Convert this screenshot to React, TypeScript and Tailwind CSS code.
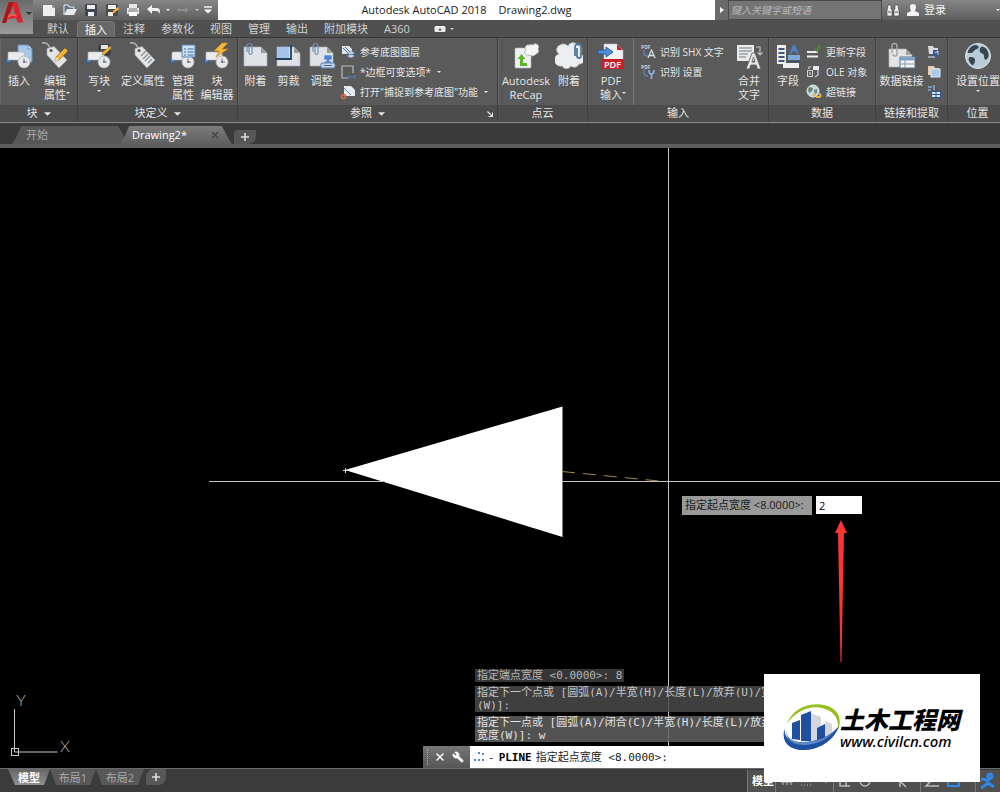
import clsx from 'clsx';
import { Wrench, X } from 'lucide-react';
import React from 'react';

type IconProps = { className?: string };

/* ---------- shared bits ---------- */

function Caret({ className }: IconProps) {
  return (
    <svg viewBox="0 0 8 4" className={clsx('shrink-0', className ?? 'h-1 w-2')}>
      <path d="M0 0h8L4 4z" fill="currentColor" />
    </svg>
  );
}

function Big({ children }: { children: React.ReactNode }) {
  return (
    <svg viewBox="0 0 28 28" className="size-7 shrink-0">
      {children}
    </svg>
  );
}

function Small({ children }: { children: React.ReactNode }) {
  return (
    <svg viewBox="0 0 16 16" className="size-4 shrink-0">
      {children}
    </svg>
  );
}

function BlockShape() {
  return (
    <>
      <path d="M4 18l4-3" stroke="#b8bec6" />
      <rect x="1.500" y="16.500" width="4" height="4" fill="#5b80ad" stroke="#3c5f8f" />
      <rect x="3" y="10" width="16" height="8" rx="1" fill="#e8ebef" stroke="#b2b8c0" strokeWidth="0.6" />
      <circle cx="19" cy="20" r="6" fill="#e6e8ea" stroke="#aeb2b7" strokeWidth="0.8" />
      <path d="M19 16.500V20h3" stroke="#6b7077" fill="none" />
      <circle cx="19" cy="20" r="1" fill="#6b7077" />
    </>
  );
}

function TagShape() {
  return (
    <>
      <path d="M1 1c5-1 7 2 9 7" stroke="#b9bcc0" strokeWidth="1.400" fill="none" />
      <path d="M6 6.500l7-2L26 18l-8 8L6 13z" fill="#e2e4e6" stroke="#a5a9ad" strokeWidth="0.7" />
      <circle cx="10" cy="8.500" r="1.600" fill="#5a5a5a" />
    </>
  );
}

function SheetShape() {
  return (
    <>
      <path d="M2 5h17l6 6v13H2z" fill="#dfe3e8" stroke="#aab0b7" strokeWidth="0.7" />
      <path d="M19 5v6h6z" fill="#9c9a93" />
    </>
  );
}

function Clip() {
  return <path d="M5 10V4a2.500 2.500 0 015 0v7a1.500 1.500 0 01-3 0V5" fill="none" stroke="#6f8fae" strokeWidth="1.200" />;
}

/* ---------- large ribbon icons ---------- */

const insertIcon = (
  <Big>
    <path d="M13 3h10l4 4v13H13z" fill="#a9c7ea" stroke="#6d91bd" />
    <path d="M23 3v4h4" fill="#dce9f7" stroke="#6d91bd" />
    <BlockShape />
  </Big>
);

const editAttrIcon = (
  <Big>
    <TagShape />
    <path d="M14 19l1-4L24 6l3 3-9 9z" fill="#f0b437" stroke="#9b6c12" strokeWidth="0.7" />
    <path d="M14 19l1-4 3 3z" fill="#efe0c2" />
  </Big>
);

const writeBlockIcon = (
  <Big>
    <rect x="14" y="3" width="11" height="10" rx="1" fill="#4e4e4e" stroke="#2e2e2e" />
    <rect x="16" y="3" width="7" height="4" fill="#e6e6e6" />
    <BlockShape />
    <path d="M17 13l1-3 7-6 1.500 2-6.500 6z" fill="#f0b437" stroke="#9b6c12" strokeWidth="0.5" />
  </Big>
);

const defineAttrIcon = (
  <Big>
    <TagShape />
    <path d="M12 14l5-5M14 17l5-5M16 19l5-5M19 21l4-4" stroke="#8b9197" strokeWidth="1.300" />
  </Big>
);

const manageAttrIcon = (
  <Big>
    <BlockShape />
    <rect x="13" y="3" width="13" height="12" fill="#cfe0f3" stroke="#5783b6" />
    <path d="M15 7h2M15 10h2M15 13h2M18.500 7h6M18.500 10h6M18.500 13h6" stroke="#3f6da3" />
  </Big>
);

const blockEditorIcon = (
  <Big>
    <BlockShape />
    <path d="M19 1l-8 8h5l-3 6 12-8h-6l6-6z" fill="#f6b73c" stroke="#c07f12" strokeWidth="0.6" />
  </Big>
);

const attachIcon = (
  <Big>
    <SheetShape />
    <Clip />
  </Big>
);

const clipIcon = (
  <Big>
    <SheetShape />
    <rect x="2" y="5" width="12" height="11" fill="#a7c5ea" />
    <path d="M0 17h16V3" fill="none" stroke="#24405f" strokeWidth="1.800" />
  </Big>
);

const adjustIcon = (
  <Big>
    <SheetShape />
    <Clip />
    <path d="M16 13h8v5h-3l4 3H15l4-3h-3z" fill="#4b84d8" stroke="#dfe9f6" strokeWidth="0.6" />
    <rect x="13" y="21" width="14" height="5" rx="1" fill="#c4d5ea" stroke="#5d7fa8" />
    <path d="M16 23.500h8" stroke="#3e6699" />
  </Big>
);

const recapIcon = (
  <Big>
    <rect x="3" y="6" width="16" height="20" rx="1" fill="#eef0f0" stroke="#b4b8b8" strokeWidth="0.6" />
    <path
      d="M14 8a3 3 0 013-5 3.500 3.500 0 014 0 3 3 0 015 4 3 3 0 01-2 5 4 4 0 01-6 1 3 3 0 01-4-5z"
      fill="#f6f6f6"
      stroke="#9da1a3"
      strokeWidth="0.7"
    />
    <path d="M15 24H8v-7H5.500L9.500 12l4 5H11v4h4z" fill="#5fb52a" />
  </Big>
);

const cloudIcon = (
  <Big>
    <path
      d="M4 12a5 5 0 011-9 6 6 0 018 1 5 5 0 019-1 5 5 0 013 9 5 5 0 01-1 10 5 5 0 01-8 2 5 5 0 01-9 0 5 5 0 01-3-12z"
      fill="#eceef0"
      stroke="#b3b7bb"
      strokeWidth="0.7"
    />
    <path d="M20 14V5a3 3 0 016 0v9a2 2 0 01-4 0V6" fill="none" stroke="#55789f" strokeWidth="1.800" />
  </Big>
);

const pdfIcon = (
  <Big>
    <path d="M7 2h13l6 6v10H7z" fill="#f2f3f4" stroke="#b6b9bc" strokeWidth="0.6" />
    <path d="M20 2v6h6z" fill="#c9232d" />
    <path d="M1 8h8V5l7 5-7 5v-3H1z" fill="#4f8ed8" stroke="#234f88" strokeWidth="0.8" />
    <rect x="4" y="17" width="23" height="10" fill="#c8202b" />
    <text x="15.500" y="25.500" textAnchor="middle" fill="#fff" fontSize="9" fontFamily="Open Sans" fontWeight="600">
      PDF
    </text>
  </Big>
);

const mergeTextIcon = (
  <Big>
    <rect x="2" y="3" width="17" height="16" fill="#e9ebec" />
    <path d="M4 6h13M4 9h13M4 12h9M4 15h7" stroke="#737a80" strokeWidth="1.200" />
    <path d="M21 5h4v8M22.500 10.500L25 13l2.500-2.500" fill="none" stroke="#b8bcc0" strokeWidth="1.200" />
    <path d="M11 27l6-16h3l6 16h-3.500l-1.400-4h-5.200l-1.400 4zM17 20h3l-1.500-5z" fill="#e2e4e6" stroke="#5a5a5a" strokeWidth="0.8" fillRule="evenodd" />
  </Big>
);

const fieldIcon = (
  <Big>
    <rect x="3" y="3" width="9" height="19" fill="#eceef0" />
    <path d="M4.500 7h6M4.500 11h6M4.500 15h6M4.500 19h6" stroke="#3f567a" strokeWidth="1.800" />
    <path d="M15 12l4-9h2l4 9h-2l-1-2.500h-4L17 12z" fill="#4e7fc4" />
    <rect x="14" y="13" width="12" height="5" fill="#7ea7db" />
    <rect x="9" y="21" width="16" height="5" fill="#eceef0" />
    <path d="M14 19.500h12" stroke="#33517c" />
  </Big>
);

const dataLinkIcon = (
  <Big>
    <path d="M1 7h17l6 6v12H1z" fill="#e3e4e5" stroke="#acafb2" strokeWidth="0.7" />
    <path d="M18 7v6h6z" fill="#a6a39b" />
    <path d="M4 11V4a2.500 2.500 0 015 0v8a2 2 0 01-4 0" fill="none" stroke="#a3a6aa" strokeWidth="1.500" />
    <rect x="12" y="15" width="15" height="11" fill="#f3f4f5" stroke="#54708f" />
    <path d="M12 17h15" stroke="#7fa0c8" strokeWidth="3" />
    <path d="M17 18v8M12 22h15" stroke="#8a96a3" />
  </Big>
);

const globeIcon = (
  <Big>
    <circle cx="14" cy="14" r="12.500" fill="#b9cdd6" stroke="#dfe5e8" />
    <path d="M5 7c3-4 7-5 9-3s-1 3-3 4-2 3-4 3-5 1-2-4zM17 5c3-1 6 2 7 5s1 5-1 7-3 0-3-3-3-2-4-4 0-4 1-5zM6 15c2 0 5 0 5 3s-1 4-2 5-3-2-4-4 0-4 1-4z" fill="#37474f" />
  </Big>
);

/* ---------- small ribbon icons ---------- */

const layersIcon = (
  <Small>
    <path d="M2 2h7l3 3v5H2z" fill="#dfe6ee" />
    <path d="M3 4l5 5M5 3l5 5" stroke="#466d9b" />
    <path d="M7 9l4-2 4 2-4 2zM7 12l4-2 4 2-4 2z" fill="#c9d8ea" stroke="#5a7ba6" strokeWidth="0.6" />
  </Small>
);

const frameIcon = (
  <Small>
    <path d="M8 14H2V2h11v7" fill="none" stroke="#b9bec4" strokeWidth="1.200" />
    <path d="M9 11v4M15 11v4M11 12v2M13 12v2" stroke="#4d82c4" />
  </Small>
);

const snapIcon = (
  <Small>
    <path d="M4 2h7l4 4v6H4z" fill="#e8ebee" />
    <path d="M4 4l7 7" stroke="#688ab4" />
    <circle cx="3.500" cy="12.500" r="2" fill="none" stroke="#e5672b" strokeWidth="1.600" />
  </Small>
);

function PdfGlyph({ children }: { children: React.ReactNode }) {
  return (
    <Small>
      <text x="1" y="5" fontSize="5" fill="#cdd1d5" fontFamily="Open Sans" fontWeight="700">
        PDF
      </text>
      <path d="M4 6c-1 4 1 6 4 6" fill="none" stroke="#5f84b5" strokeWidth="1.400" />
      {children}
    </Small>
  );
}

const shxIcon = (
  <PdfGlyph>
    <path d="M8 14l3.500-8L15 14M9.500 11.500h4" fill="none" stroke="#d9dde1" strokeWidth="1.300" />
  </PdfGlyph>
);

const shxSettingsIcon = (
  <PdfGlyph>
    <path d="M11.500 15V10M9 6c0 3 1 4 2.500 4S14 9 14 6" fill="none" stroke="#86b0e4" strokeWidth="1.800" />
  </PdfGlyph>
);

const updateFieldIcon = (
  <Small>
    <path d="M1 8h11M1 12.500h11" stroke="#eceeef" strokeWidth="2.200" />
    <path d="M9 5l2 2 3-6" fill="none" stroke="#4f8a31" strokeWidth="1.800" />
  </Small>
);

const oleIcon = (
  <Small>
    <rect x="7" y="2" width="6" height="4" fill="#e5e7e9" />
    <rect x="1.500" y="6.500" width="5" height="6" fill="none" stroke="#cfd2d5" />
    <path d="M4 8v3M12 6v5l-3 2M5 3H3v2" fill="none" stroke="#cfd2d5" strokeWidth="1.200" />
  </Small>
);

const hyperlinkIcon = (
  <Small>
    <circle cx="7" cy="7" r="6" fill="#c3d6dd" stroke="#e1e6e8" />
    <path d="M3 3l4 1-1 3-3 2-1-3zM8 6l3-1v4l-2 1z" fill="#6b8577" />
    <path d="M8 12a2 2 0 012-2M10 13h3a1.500 1.500 0 000-3" fill="none" stroke="#e5b434" strokeWidth="2" />
  </Small>
);

const uploadIcon = (
  <Small>
    <path d="M2 2h5l1 2h4v6H3z" fill="#d9dde1" />
    <rect x="7" y="6" width="7" height="7" fill="#33578e" />
    <path d="M2 13h7M9 9l3-2v4" stroke="#e3e7ea" fill="none" />
  </Small>
);

const downloadIcon = (
  <Small>
    <path d="M2 2h6l1 2h4v7H2z" fill="#e7cdb0" />
    <rect x="5" y="5" width="9" height="8" fill="#a9c8ec" stroke="#dce8f5" />
  </Small>
);

const extractIcon = (
  <Small>
    <path d="M2 3h4M2 6h3M8 1v5" stroke="#87abd8" strokeWidth="1.600" />
    <rect x="5.500" y="7.500" width="9" height="6" fill="#d7e3f2" stroke="#2f568d" />
    <path d="M6 10.500h9M10 7v7" stroke="#2f568d" />
  </Small>
);

/* ---------- ribbon building blocks ---------- */

interface BigButtonProps {
  icon: React.ReactNode;
  lines: string[];
  width: string;
  menu?: 'below' | 'side';
}

function BigButton({ icon, lines, width, menu }: BigButtonProps) {
  return (
    <button type="button" className={clsx('flex shrink-0 flex-col items-center pt-1', width)}>
      {icon}
      <span className="relative mt-1 text-[11px] leading-[14px] whitespace-nowrap">
        {lines.map((line) => (
          <span key={line} className="block">
            {line}
          </span>
        ))}
        {menu === 'side' && <Caret className="absolute -right-1 bottom-2 h-0.5 w-1" />}
      </span>
      {menu === 'below' && <Caret className="mt-0.5 h-0.5 w-1" />}
    </button>
  );
}

interface RowButtonProps {
  icon: React.ReactNode;
  label: string;
  menu?: boolean;
  iconOnly?: boolean;
}

function RowButton({ icon, label, menu, iconOnly }: RowButtonProps) {
  return (
    <button
      type="button"
      aria-label={iconOnly ? label : undefined}
      className="flex h-5 items-center gap-1 text-[10px] leading-5 whitespace-nowrap"
    >
      {icon}
      {!iconOnly && label}
      {menu && <Caret className="ml-0.5 h-0.5 w-1" />}
    </button>
  );
}

interface PanelProps {
  title: string;
  menu?: boolean;
  launcher?: boolean;
  className?: string;
  children: React.ReactNode;
}

function Panel({ title, menu, launcher, className, children }: PanelProps) {
  return (
    <section className={clsx('flex flex-col border-r border-[#3f3f3f] shadow-[inset_1px_0_#666]', className)}>
      <div className="flex h-[67px] px-px">{children}</div>
      <div className="relative flex h-[17px] items-center justify-center gap-1.5 bg-[#4c4c4c] text-[11px] whitespace-nowrap">
        {title}
        {menu && <Caret className="h-1 w-[7px]" />}
        {launcher && (
          <button type="button" aria-label={title} className="absolute right-1">
            <svg viewBox="0 0 6 6" className="size-1.5">
              <path d="M0.500 0.500L5 5M5.500 1.500v4h-4" fill="none" stroke="#e6e6e6" strokeWidth="1.200" />
            </svg>
          </button>
        )}
      </div>
    </section>
  );
}

function Ribbon() {
  return (
    <div className="flex overflow-hidden border-t border-[#383838] border-b border-b-[#8b8b8b] bg-[#5a5a5a] text-[#e6e6e6]">
      <Panel title="块" menu className="w-[78px] shrink-0">
        <BigButton icon={insertIcon} lines={['插入']} width="w-9" />
        <BigButton icon={editAttrIcon} lines={['编辑', '属性']} width="w-9" menu="side" />
      </Panel>
      <Panel title="块定义" menu className="w-[160px] shrink-0">
        <BigButton icon={writeBlockIcon} lines={['写块']} width="w-10" menu="below" />
        <BigButton icon={defineAttrIcon} lines={['定义属性']} width="w-12" />
        <BigButton icon={manageAttrIcon} lines={['管理', '属性']} width="w-8" />
        <BigButton icon={blockEditorIcon} lines={['块', '编辑器']} width="w-9" />
      </Panel>
      <Panel title="参照" menu launcher className="w-[260px] shrink-0">
        <BigButton icon={attachIcon} lines={['附着']} width="w-[33px]" />
        <BigButton icon={clipIcon} lines={['剪裁']} width="w-[33px]" />
        <BigButton icon={adjustIcon} lines={['调整']} width="w-[33px]" />
        <div className="flex flex-col pt-1 pl-0.5">
          <RowButton icon={layersIcon} label="参考底图图层" />
          <RowButton icon={frameIcon} label="*边框可变选项*" menu />
          <RowButton icon={snapIcon} label={'打开"捕捉到参考底图"功能'} menu />
        </div>
      </Panel>
      <Panel title="点云" className="w-[90px] shrink-0">
        <BigButton icon={recapIcon} lines={['Autodesk', 'ReCap']} width="w-[54px]" />
        <BigButton icon={cloudIcon} lines={['附着']} width="w-8" />
      </Panel>
      <Panel title="输入" className="w-[181px] shrink-0">
        <BigButton icon={pdfIcon} lines={['PDF', '输入']} width="w-11" menu="side" />
        <div className="flex grow flex-col border-l border-[#777] pt-1 pl-1.5">
          <RowButton icon={shxIcon} label="识别 SHX 文字" />
          <RowButton icon={shxSettingsIcon} label="识别 设置" />
        </div>
        <BigButton icon={mergeTextIcon} lines={['合并', '文字']} width="w-9" />
      </Panel>
      <Panel title="数据" className="w-[107px] shrink-0">
        <BigButton icon={fieldIcon} lines={['字段']} width="w-9" />
        <div className="flex flex-col pt-1">
          <RowButton icon={updateFieldIcon} label="更新字段" />
          <RowButton icon={oleIcon} label="OLE 对象" />
          <RowButton icon={hyperlinkIcon} label="超链接" />
        </div>
      </Panel>
      <Panel title="链接和提取" className="w-[72px] shrink-0">
        <BigButton icon={dataLinkIcon} lines={['数据链接']} width="w-[49px]" />
        <div className="flex flex-col pt-1">
          <RowButton icon={uploadIcon} label="上载到源" iconOnly />
          <RowButton icon={downloadIcon} label="从源下载" iconOnly />
          <RowButton icon={extractIcon} label="提取数据" iconOnly />
        </div>
      </Panel>
      <Panel title="位置" className="min-w-[60px] grow">
        <BigButton icon={globeIcon} lines={['设置位置']} width="w-[58px]" menu="below" />
      </Panel>
    </div>
  );
}

/* ---------- title bar ---------- */

function QuickAccess() {
  return (
    <div className="flex w-[185px] shrink-0 items-center gap-[5px] bg-linear-to-b from-[#868686] to-[#5f5f5f] pl-2 text-[#f1f1f1]">
      <button type="button" aria-label="新建">
        <svg viewBox="0 0 16 16" className="size-4">
          <path d="M2 3h9l3 3v8H2z" fill="#eee" />
          <path d="M11 3v3h3z" fill="#999" />
        </svg>
      </button>
      <button type="button" aria-label="打开">
        <svg viewBox="0 0 16 16" className="size-4">
          <path d="M2 13V3h4l1 2h5v2" fill="#5f6f80" stroke="#eee" />
          <path d="M2 13l3-6h10l-3 6z" fill="#e8eaec" />
        </svg>
      </button>
      <button type="button" aria-label="保存">
        <svg viewBox="0 0 16 16" className="size-4">
          <rect x="2" y="2" width="12" height="12" rx="1" fill="#3d4650" />
          <path d="M4 3h8v4H4zM5 10h6v4H5z" fill="#eee" />
        </svg>
      </button>
      <button type="button" aria-label="另存为">
        <svg viewBox="0 0 16 16" className="size-4">
          <rect x="2" y="2" width="12" height="12" rx="1" fill="#4b4b4b" />
          <path d="M4 3h8v4H4zM4 10h5v4H4z" fill="#eee" />
          <path d="M8 12l1-3 5-4 1 2-5 4z" fill="#f2b63a" />
        </svg>
      </button>
      <button type="button" aria-label="打印">
        <svg viewBox="0 0 16 16" className="size-4">
          <path d="M4 2h8v4H4zM2 6h12v6H2z" fill="#e6e6e6" />
          <path d="M3 9h10M4 7h8" stroke="#777" />
          <path d="M4 10h8v4H4z" fill="#fff" />
        </svg>
      </button>
      <button type="button" aria-label="放弃" className="flex items-center gap-1">
        <svg viewBox="0 0 16 16" className="size-4">
          <path d="M1 7l5-4v3h5c3 0 3 3 3 6-1-2-2-3-4-3H6v3z" fill="#f2f2f2" />
        </svg>
        <Caret className="h-0.5 w-1" />
      </button>
      <button type="button" aria-label="重做" className="flex items-center gap-1 text-[#ccc]">
        <svg viewBox="0 0 16 16" className="size-4">
          <path d="M14 8l-4-3v2H2v2h8v2z" fill="#8d8d8d" />
        </svg>
        <Caret className="h-0.5 w-1" />
      </button>
      <button type="button" aria-label="自定义快速访问工具栏">
        <svg viewBox="0 0 8 8" className="size-2">
          <path d="M0 1h8" stroke="#fff" strokeWidth="1.400" />
          <path d="M0 3.500h8L4 7.500z" fill="#fff" />
        </svg>
      </button>
    </div>
  );
}

function TitleBar() {
  return (
    <div className="flex h-5">
      <QuickAccess />
      <h1 className="flex grow items-center justify-center gap-3 bg-white text-[11px] whitespace-nowrap text-[#222]">
        <span>Autodesk AutoCAD 2018</span>
        <span>Drawing2.dwg</span>
      </h1>
      <button type="button" aria-label="展开搜索" className="flex w-[13px] items-center justify-center bg-[#6a6a6a]">
        <svg viewBox="0 0 4 6" className="h-1.5 w-1">
          <path d="M0 0l4 3-4 3z" fill="#fff" />
        </svg>
      </button>
      <input
        aria-label="键入关键字或短语"
        placeholder="键入关键字或短语"
        className="w-[154px] border border-[#4a4a4a] bg-[#747474] px-0.5 text-[10px] italic outline-none placeholder:text-[#b8b8b8]"
      />
      <div className="flex w-[118px] items-center gap-1.5 bg-linear-to-b from-[#868686] to-[#5f5f5f] pl-1 text-[11px] text-[#f1f1f1]">
        <button type="button" aria-label="搜索">
          <svg viewBox="0 0 14 14" className="size-3.5">
            <path d="M1 13V8l1-6h3v4h1v7zM13 13V8l-1-6H9v4H8v7z" fill="#eee" stroke="#444" strokeWidth="0.6" />
            <path d="M2 9h3M9 9h3" stroke="#555" />
          </svg>
        </button>
        <button type="button" className="flex items-center gap-1">
          <svg viewBox="0 0 14 14" className="size-3.5">
            <path d="M4 4a3 3 0 016 0c0 2-1 3-1 4l4 2v3H1v-3l4-2C5 7 4 6 4 4z" fill="#f4f4f4" />
          </svg>
          登录
        </button>
        <Caret className="ml-auto h-0.5 w-1" />
      </div>
    </div>
  );
}

const ribbonTabs = ['默认', '插入', '注释', '参数化', '视图', '管理', '输出', '附加模块', 'A360'];

function RibbonTabs() {
  return (
    <nav className="flex h-[17px] items-end pl-1.5 text-[11px] leading-4 text-[#d2d2d2]">
      {ribbonTabs.map((tab) => (
        <button
          key={tab}
          type="button"
          className={clsx(
            'h-4 whitespace-nowrap',
            tab === '插入'
              ? 'rounded-t-sm border border-b-0 border-[#777] bg-[#686868] px-[7px] leading-[14px] text-white'
              : 'px-2',
          )}
        >
          {tab}
        </button>
      ))}
      <button type="button" aria-label="最小化功能区" className="flex h-4 items-center gap-1 px-4">
        <svg viewBox="0 0 12 8" className="h-2 w-3">
          <rect x="0.500" y="1" width="11" height="6" rx="1.500" fill="#eee" />
          <path d="M4 5.500h4L6 3z" fill="#555" />
        </svg>
        <Caret className="h-0.5 w-1" />
      </button>
    </nav>
  );
}

function AppHeader() {
  return (
    <header className="flex bg-[#505050]">
      <button
        type="button"
        aria-label="应用程序菜单"
        className="flex h-[34px] w-[33px] shrink-0 items-center bg-linear-to-b from-[#6a6a6a] to-[#9a9a9a] pb-2 text-[#333]"
      >
        <svg viewBox="0 0 24 26" className="h-[26px] w-6 shrink-0">
          <path d="M2 23L9 2h8l6 20-5 1-2-5-9 1-1 4z" fill="#d8232a" />
          <path d="M2 23L9 2h4L6 23z" fill="#a8161d" />
          <path d="M10 14h5l-2-8z" fill="#7b7b7b" />
          <path d="M7 19c3-3 6-4 10-2l-1-3H9z" fill="#ef5a55" />
        </svg>
        <Caret className="ml-0.5 h-[3px] w-1.5" />
      </button>
      <div className="min-w-0 grow">
        <TitleBar />
        <RibbonTabs />
      </div>
    </header>
  );
}

function DocumentTabs() {
  return (
    <div className="flex h-[25px] items-end border-b-4 border-[#5f5f5f] bg-[#3a3a3a] pl-3 text-[11px] leading-[18px]">
      <button type="button" className="h-[18px] w-[116px] bg-[#575757] pl-3.5 text-left text-[#a8a8a8] [clip-path:polygon(0_100%,5px_55%,9px_0,106px_0,112px_55%,100%_100%)]">
        开始
      </button>
      <div className="-ml-2 flex h-[18px] w-28 items-center justify-between bg-linear-to-b from-[#7c7c7c] to-[#5f5f5f] pr-3 pl-3 text-white [clip-path:polygon(0_100%,5px_55%,9px_0,102px_0,107px_55%,100%_100%)]">
        <button type="button">Drawing2*</button>
        <button type="button" aria-label="关闭" className="text-[#484848]">
          <X className="size-2.5" strokeWidth={4} />
        </button>
      </div>
      <button type="button" aria-label="新图形" className="ml-0.5 flex h-3.5 w-[22px] items-center justify-center rounded-tl-sm rounded-br-lg bg-[#575757] text-[#ddd]">
        <svg viewBox="0 0 8 8" className="size-2">
          <path d="M4 0v8M0 4h8" stroke="currentColor" strokeWidth="1.600" />
        </svg>
      </button>
    </div>
  );
}

/* ---------- drawing area ---------- */

function Drawing() {
  return (
    <svg className="absolute inset-0 h-full w-full">
      <path d="M345 322L562.500 258.500V389z" fill="#fff" />
      <path d="M343 322.500h5M345.500 320v5" stroke="#ddd" />
      <line x1="209" y1="333.500" x2="100%" y2="333.500" stroke="#c4c4c4" />
      <path d="M385 333.500h177" stroke="#fff" />
      <line x1="668.500" y1="0" x2="668.500" y2="100%" stroke="#c4c4c4" />
      <path d="M562 323.500L664 333.500" stroke="#a58a45" strokeDasharray="13 8" />
      <path d="M841 372l6 13h-3l-2.500 129h-1L838 385h-3z" fill="#f93535" />
    </svg>
  );
}

function UcsIcon() {
  return (
    <svg viewBox="0 0 76 84" className="absolute bottom-0 left-1 h-[84px] w-[76px] font-['Lato',sans-serif] font-light">
      <path d="M10.500 25v43h43" fill="none" stroke="#c8c8c8" />
      <rect x="7.500" y="64.500" width="7" height="7" fill="none" stroke="#c8c8c8" />
      <text x="17" y="22" textAnchor="middle" fontSize="16" fill="#b5b5b5">
        Y
      </text>
      <text x="61" y="68" textAnchor="middle" fontSize="16" fill="#b5b5b5">
        X
      </text>
    </svg>
  );
}

function DynamicInput() {
  return (
    <div className="absolute top-[348px] left-[682px] flex items-start gap-1 text-[11px]">
      <label htmlFor="start-width" className="h-[19px] w-[130px] bg-[#999] pl-[3px] leading-[18px] whitespace-nowrap text-[#1c1c1c]">
        {'指定起点宽度 <8.0000>:'}
      </label>
      <input id="start-width" defaultValue="2" className="h-[18px] w-[46px] bg-white pl-[3px] text-black outline-none" />
    </div>
  );
}

function CommandLine() {
  return (
    <div className="absolute bottom-0 left-[423px] flex w-[550px] flex-col gap-1 font-['DejaVu_Sans_Mono','Noto_Sans_CJK_SC',monospace] text-[11px] leading-[13px] whitespace-nowrap">
      <div className="flex flex-col items-start gap-1 pl-[52px]">
        <p className="bg-[#3c3c3c]/90 px-0.5 text-[#b5b5b5]">{'指定端点宽度 <0.0000>: 8'}</p>
        <p className="w-full bg-[#4a4a4a]/85 px-0.5 text-[#c4c4c4]">
          指定下一个点或 [圆弧(A)/半宽(H)/长度(L)/放弃(U)/宽度
          <br />
          (W)]:
        </p>
        <p className="w-full bg-[#606060]/85 px-0.5 text-[#e2e2e2]">
          指定下一点或 [圆弧(A)/闭合(C)/半宽(H)/长度(L)/放弃(U)/
          <br />
          宽度(W)]: w
        </p>
      </div>
      <div className="flex h-[22px] bg-white">
        <div className="flex w-[47px] items-center gap-1.5 bg-linear-to-b from-[#777] to-[#555] pl-1 text-white">
          <span className="h-4 border-l border-dotted border-[#aaa]" />
          <button type="button" aria-label="关闭">
            <X className="size-3" strokeWidth={3} />
          </button>
          <button type="button" aria-label="自定义">
            <Wrench className="size-3 -scale-x-100 fill-current" />
          </button>
        </div>
        <label htmlFor="command" className="flex items-center gap-1 pl-1 text-[#222]">
          <svg viewBox="0 0 10 10" className="size-2.5">
            <path d="M4 0h2v2H4zM8 1h2v2H8zM0 7h2v2H0zM4 7h2v2H4zM8 7h2v2H8z" fill="#4c87cf" />
          </svg>
          <span>-</span>
          <b className="text-black">PLINE</b>
          <span>{'指定起点宽度 <8.0000>:'}</span>
        </label>
        <input id="command" className="min-w-0 grow pl-1 outline-none" />
      </div>
    </div>
  );
}

/* ---------- status bar ---------- */

function LayoutTabs() {
  return (
    <div className="flex h-4 pl-2 text-[11px] leading-[15px] text-[#a9a9a9]">
      <button type="button" className="w-[42px] bg-linear-to-b from-[#666] to-[#909090] font-bold text-white [clip-path:polygon(0_0,100%_0,36px_100%,7px_100%)]">
        模型
      </button>
      <button type="button" className="w-[46px] bg-[#585858] [clip-path:polygon(0_0,100%_0,40px_100%,6px_100%)]">
        布局1
      </button>
      <button type="button" className="w-[48px] bg-[#585858] [clip-path:polygon(0_0,100%_0,42px_100%,6px_100%)]">
        布局2
      </button>
      <button type="button" aria-label="新建布局" className="ml-0.5 flex w-5 items-center justify-center rounded-tl-lg rounded-br-lg bg-[#585858] text-[#ddd]">
        <svg viewBox="0 0 8 8" className="size-2">
          <path d="M4 0v8M0 4h8" stroke="currentColor" strokeWidth="1.600" />
        </svg>
      </button>
    </div>
  );
}

function StatusBar() {
  return (
    <footer className="flex h-6 justify-between overflow-hidden border-t border-[#6c6c6c] bg-[#3b3b3b]">
      <LayoutTabs />
      <div className="mt-px flex w-[253px] divide-x divide-[#777] border-l border-[#777] bg-[#505050] text-[11px] text-[#bbb]">
        <button type="button" className="w-[28px] pl-1 text-left font-bold whitespace-nowrap text-white">
          模型
        </button>
        <button type="button" aria-label="栅格" className="w-[58px]">
          <svg viewBox="0 0 58 22" className="h-[22px] w-[58px]">
            <path d="M5 8h12M5 12h12M7 6v9M11 6v9M15 6v9" stroke="currentColor" />
            <path d="M25 8h12M25 12h12M25 15h12" stroke="currentColor" strokeDasharray="1 2" />
            <path d="M47 10h6l-3 3z" fill="currentColor" />
          </svg>
        </button>
        <button type="button" aria-label="正交" className="w-[87px]">
          <svg viewBox="0 0 87 22" className="h-[22px] w-[87px]" fill="none" stroke="currentColor" strokeWidth="1.500">
            <path d="M6 5v11h10M6 11h6v5" />
            <circle cx="31" cy="11" r="5" />
            <path d="M66 5v12M66 11l6 6" />
          </svg>
        </button>
        <button type="button" aria-label="对象捕捉" className="w-[55px]">
          <svg viewBox="0 0 55 22" className="h-[22px] w-[55px]" fill="none" stroke="currentColor" strokeWidth="1.500">
            <path d="M16 5L5 16h13" />
            <rect x="27" y="6" width="11" height="10" stroke="#2e8ae6" strokeWidth="2" />
          </svg>
        </button>
        <button type="button" aria-label="注释可见性" className="grow">
          <svg viewBox="0 0 22 22" className="size-[22px]" fill="none" stroke="#2f86e5" strokeWidth="3">
            <circle cx="14" cy="6" r="2" />
            <path d="M5 9l7 1 3-2M12 10l-1 4-6 4M12 13l6 4" />
          </svg>
        </button>
      </div>
    </footer>
  );
}

/* ---------- site badge ---------- */

function SiteBadge() {
  return (
    <aside className="absolute right-5 bottom-2.5 flex h-[108px] w-[216px] items-center bg-white pl-[18px] text-black">
      <svg viewBox="0 0 58 48" className="h-12 w-[58px] shrink-0">
        <path d="M29 9l10 4v12l-4 12h-6zM43 17l7 3v9l-7 5z" fill="#d3d6da" />
        <path d="M10 19l8-3v20l-8-1zM19 11l10-4v30H19zM35 24l8-4v14l-8 3z" fill="#1f4fa0" />
        <path d="M5 20C10 5 27-2 42 1c13 3 19 12 14 25 1-12-4-19-16-22C26 1 12 9 5 20z" fill="#94c120" />
        <path d="M3 24c-2 9 5 14 17 14 15 0 29-6 37-16-4 13-18 23-33 24C7 47-2 37 3 24z" fill="#1f4fa0" />
        <path d="M4 27c1 8 9 12 19 11 13-1 23-5 30-11-8 9-20 14-31 14C12 41 4 37 4 27z" fill="#5f86c6" />
      </svg>
      <div className="flex flex-col gap-0.5 whitespace-nowrap">
        <p className="font-['Noto_Sans_CJK_SC',sans-serif] text-[24px] leading-6 font-black italic">土木工程网</p>
        <a href="#civilcn" className="block font-['Noto_Sans','Open_Sans',sans-serif] text-[15px] leading-4 font-medium italic">
          www.civilcn.com
        </a>
      </div>
    </aside>
  );
}

export default function App() {
  return (
    <div className="relative flex min-h-screen flex-col overflow-hidden bg-black font-['Open_Sans','Noto_Sans_CJK_SC',sans-serif]">
      <AppHeader />
      <Ribbon />
      <DocumentTabs />
      <main className="relative grow bg-black">
        <Drawing />
        <UcsIcon />
        <DynamicInput />
        <CommandLine />
      </main>
      <StatusBar />
      <SiteBadge />
    </div>
  );
}
